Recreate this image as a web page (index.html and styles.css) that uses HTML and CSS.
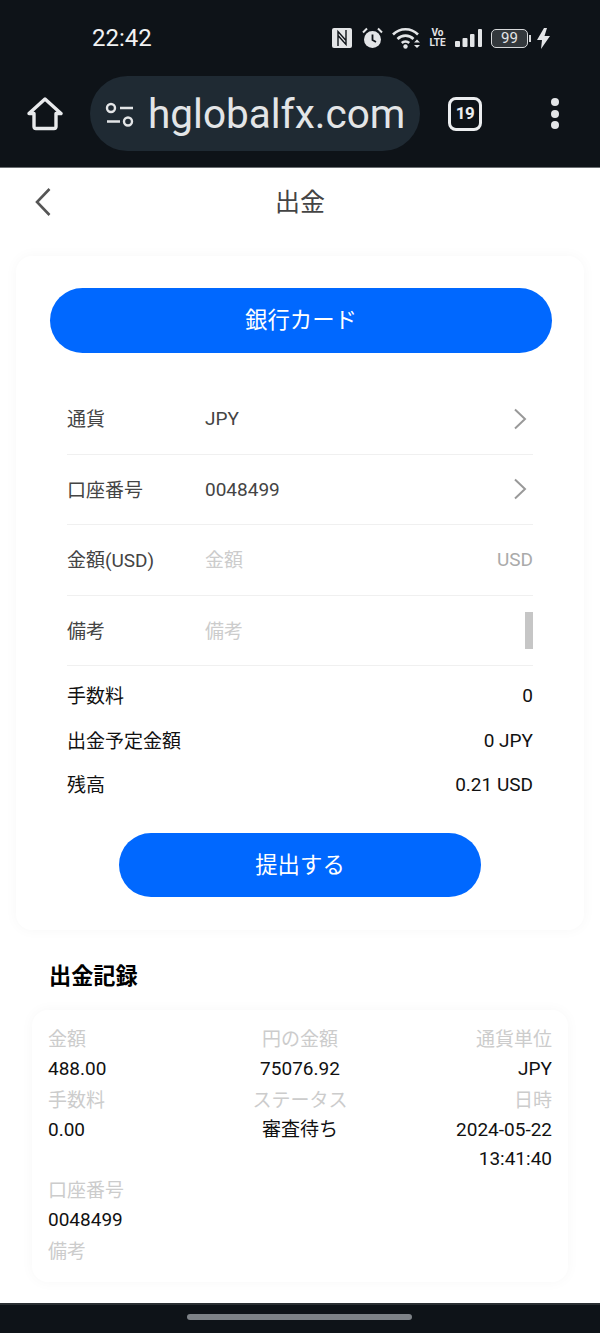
FILE: index.html
```html
<!DOCTYPE html>
<html lang="ja">
<head>
    <meta charset="UTF-8">
    <meta name="viewport" content="width=device-width, initial-scale=1.0">
    <title>出金</title>
    <link rel="stylesheet" href="styles.css">
</head>
<body>
    <header class="chrome">
        <div class="status-bar">
            <span class="clock">22:42</span>
            <div class="status-icons">
                <svg class="ic-nfc" width="20" height="20" viewBox="0 0 20 20"><rect width="20" height="20" rx="2" fill="#e3e5e7"/><path d="M6 18V3.500l8 9M14 2v14.500l-8-9" fill="none" stroke="#0e1318" stroke-width="1.400"/></svg>
                <svg class="ic-alarm" width="21" height="22" viewBox="0 0 21 22"><circle cx="10.500" cy="12.500" r="8.500" fill="#e3e5e7"/><path d="M10.500 7.500v5.500l3.500 2" fill="none" stroke="#0e1318" stroke-width="1.800"/><path d="M1 5.500 5 1.500M20 5.500l-4-4" stroke="#e3e5e7" stroke-width="2" fill="none"/></svg>
                <svg class="ic-wifi" width="29" height="22" viewBox="0 0 29 22"><g fill="none" stroke="#e3e5e7" stroke-width="2.600"><path d="M1 7.500c7-7 18-7 25 0"/><path d="M5.500 12c4.500-4.500 11.500-4.500 16 0"/><path d="M9.800 16c2-2 5.400-2 7.400 0"/></g><circle cx="13.500" cy="19.500" r="2.200" fill="#e3e5e7"/><path fill="#e3e5e7" d="M22 15.500h6l-3-3zM22 18h6l-3 3z"/></svg>
                <div class="volte"><span>Vo</span><span>LTE</span></div>
                <svg class="ic-signal" width="27" height="20" viewBox="0 0 27 20"><g fill="#e3e5e7"><rect x="0" y="13" width="5" height="6" rx="1"/><rect x="7.500" y="10" width="5" height="9" rx="1"/><rect x="15" y="6" width="4.500" height="13" rx="1"/><rect x="23" y="1" width="4" height="18" rx="1"/></g></svg>
                <div class="battery"><div class="battery-body">99</div><div class="battery-nub"></div></div>
                <svg class="ic-bolt" width="13" height="21" viewBox="0 0 13 21"><path fill="#e3e5e7" d="M7 0 0 12h5l-1 9 9-13H7.500L10 0z"/></svg>
            </div>
        </div>
        <div class="toolbar">
            <svg class="ic-home" width="36" height="36" viewBox="0 0 36 36"><path d="M2 17.500 18 3l16 14.500h-5v13a2 2 0 0 1-2 2H9a2 2 0 0 1-2-2v-13z" fill="none" stroke="#e8eaec" stroke-width="3.400" stroke-linejoin="round"/></svg>
            <div class="url-pill">
                <svg class="ic-tune" width="30" height="26" viewBox="0 0 30 26"><g fill="none" stroke="#e3e5e7" stroke-width="2.400"><circle cx="6" cy="6" r="4"/><path d="M15 6h13M2 19.500h13"/><circle cx="23" cy="19.500" r="4"/></g></svg>
                <span class="url-text">hglobalfx.com</span>
            </div>
            <div class="tab-count">19</div>
            <div class="menu-dots"><i></i><i></i><i></i></div>
        </div>
    </header>

    <main class="page">
        <div class="nav-bar">
            <svg class="ic-back" width="18" height="30" viewBox="0 0 18 30"><path d="M15.500 2 3 15l12.500 13" fill="none" stroke="#555" stroke-width="2.600"/></svg>
            <h1 class="nav-title">出金</h1>
        </div>

        <section class="card">
            <button type="button" class="btn btn-wide">銀行カード</button>
            <div class="form-rows">
                <div class="form-row">
                    <span class="form-label">通貨</span>
                    <span class="form-value">JPY</span>
                    <svg class="ic-chevron" width="14" height="22" viewBox="0 0 14 22"><path d="M2 1.500 12 11 2 20.500" fill="none" stroke="#999" stroke-width="2"/></svg>
                </div>
                <div class="form-row">
                    <span class="form-label">口座番号</span>
                    <span class="form-value">0048499</span>
                    <svg class="ic-chevron" width="14" height="22" viewBox="0 0 14 22"><path d="M2 1.500 12 11 2 20.500" fill="none" stroke="#999" stroke-width="2"/></svg>
                </div>
                <div class="form-row">
                    <span class="form-label">金額(USD)</span>
                    <span class="form-value placeholder">金額</span>
                    <span class="form-unit">USD</span>
                </div>
                <div class="form-row">
                    <span class="form-label">備考</span>
                    <span class="form-value placeholder">備考</span>
                    <div class="resize-bar"></div>
                </div>
            </div>
            <div class="summary">
                <div class="summary-row"><span class="summary-label">手数料</span><span>0</span></div>
                <div class="summary-row"><span class="summary-label">出金予定金額</span><span>0 JPY</span></div>
                <div class="summary-row"><span class="summary-label">残高</span><span>0.21 USD</span></div>
            </div>
            <button type="button" class="btn btn-submit">提出する</button>
        </section>

        <h2 class="records-title">出金記録</h2>
        <section class="record">
            <div class="cell"><span class="cell-label">金額</span><span>488.00</span></div>
            <div class="cell center"><span class="cell-label">円の金額</span><span>75076.92</span></div>
            <div class="cell right"><span class="cell-label">通貨単位</span><span>JPY</span></div>
            <div class="cell"><span class="cell-label">手数料</span><span>0.00</span></div>
            <div class="cell center"><span class="cell-label">ステータス</span><span>審査待ち</span></div>
            <div class="cell right"><span class="cell-label">日時</span><span>2024-05-22<br>13:41:40</span></div>
            <div class="cell"><span class="cell-label">口座番号</span><span>0048499</span></div>
            <div class="cell center"></div>
            <div class="cell right"></div>
            <div class="cell"><span class="cell-label">備考</span></div>
        </section>
    </main>

    <footer class="gesture-bar"><div class="home-handle"></div></footer>
</body>
</html>
```

FILE: styles.css
```css
* {
    box-sizing: border-box;
}
body {
    margin: 0;
    height: 1333px;
    display: flex;
    flex-direction: column;
    overflow: hidden;
    background-color: #fff;
    font-family: Roboto, "Noto Sans CJK JP", sans-serif;
    font-size: 19px;
    color: #111;
}
.chrome {
    height: 168px;
    flex: none;
    background-color: #0e1318;
    border-bottom: 1px solid #6b6f72;
}
.status-bar {
    height: 76px;
    display: flex;
    align-items: center;
    padding-left: 92px;
    padding-right: 50px;
}
.clock {
    font-size: 24px;
    color: #f1f2f3;
}
.status-icons {
    margin-left: auto;
    display: flex;
    align-items: center;
}
.ic-alarm {
    margin-left: 10px;
}
.ic-wifi {
    margin-left: 9px;
}
.volte {
    margin-left: 9px;
    width: 15px;
    display: flex;
    flex-direction: column;
    align-items: center;
    font-size: 10px;
    line-height: 10px;
    font-weight: 700;
    color: #e3e5e7;
}
.ic-signal {
    margin-left: 10px;
}
.battery {
    margin-left: 9px;
    display: flex;
    align-items: center;
    gap: 1px;
}
.battery-body {
    width: 37px;
    height: 19px;
    border: 1.5px solid #d5d7d9;
    border-radius: 5px;
    background-color: #33383c;
    color: #e3e5e7;
    font-size: 15px;
    line-height: 16px;
    text-align: center;
}
.battery-nub {
    width: 2px;
    height: 7px;
    background-color: #d5d7d9;
}
.ic-bolt {
    margin-left: 6px;
}
.toolbar {
    height: 75px;
    display: flex;
    align-items: center;
}
.ic-home {
    margin-left: 27px;
}
.url-pill {
    margin-left: 27px;
    width: 330px;
    height: 75px;
    border-radius: 38px;
    background-color: #1f2a33;
    display: flex;
    align-items: center;
    padding-left: 15px;
}
.ic-tune {
    margin-top: 2px;
}
.url-text {
    margin-left: 13px;
    font-size: 40.500px;
    color: #e3e5e7;
    white-space: nowrap;
}
.tab-count {
    margin-left: 28px;
    width: 34px;
    height: 34px;
    border: 3.500px solid #eceef0;
    border-radius: 8px;
    color: #eceef0;
    font-size: 17px;
    font-weight: 700;
    letter-spacing: -0.5px;
    line-height: 27px;
    text-align: center;
}
.menu-dots {
    margin-left: 69px;
    display: flex;
    flex-direction: column;
    gap: 3.500px;
}
.menu-dots i {
    width: 8px;
    height: 8px;
    border-radius: 50%;
    background-color: #e3e5e7;
}
.page {
    flex: 1;
    min-height: 0;
}
.nav-bar {
    height: 68px;
    position: relative;
    display: flex;
    align-items: center;
    justify-content: center;
    padding-bottom: 4px;
}
.ic-back {
    position: absolute;
    left: 34px;
    top: 19px;
}
.nav-title {
    margin: 0;
    font-size: 25px;
    font-weight: 400;
    color: #444;
}
.card {
    margin: 20px 16px 0;
    height: 674px;
    padding: 32px 34px 0;
    border-radius: 16px;
    background-color: #fff;
    box-shadow: 0 0 14px rgba(0, 0, 0, 0.035);
}
.btn {
    display: block;
    border: none;
    background-color: #0068ff;
    color: #fff;
    font-family: inherit;
    font-size: 22.400px;
}
.btn-wide {
    width: 502px;
    height: 65px;
    border-radius: 33px;
    padding-bottom: 7px;
}
.form-rows {
    margin-top: 31px;
    padding: 0 17px;
}
.form-row {
    height: 70.500px;
    display: flex;
    align-items: center;
    border-bottom: 1px solid #f0f0f0;
    color: #444;
}
.form-label {
    width: 138px;
    flex: none;
    padding-bottom: 2px;
}
.form-value {
    flex: 1;
}
.placeholder {
    color: #ccc;
    padding-bottom: 2px;
}
.form-unit {
    color: #aaa;
}
.ic-chevron {
    margin-right: 6px;
}
.resize-bar {
    width: 8px;
    height: 37px;
    background-color: #c6c6c6;
}
.summary {
    padding: 7px 17px 0;
}
.summary-row {
    height: 44.700px;
    display: flex;
    align-items: center;
    justify-content: space-between;
}
.summary-label {
    padding-bottom: 2px;
}
.btn-submit {
    margin: 26px auto 0;
    width: 362px;
    height: 64px;
    border-radius: 32px;
    padding-bottom: 6px;
}
.records-title {
    margin: 30px 0 0 49px;
    height: 32px;
    font-size: 22.200px;
    line-height: 32px;
    font-weight: 700;
    color: #000;
}
.record {
    margin: 18px 32px 0;
    height: 272px;
    padding: 15px 16px 0;
    border-radius: 16px;
    background-color: #fff;
    box-shadow: 0 0 14px rgba(0, 0, 0, 0.035);
    display: grid;
    grid-template-columns: 1fr 1fr 1fr;
    align-content: start;
    line-height: 29px;
}
.cell {
    display: flex;
    flex-direction: column;
    align-items: flex-start;
}
.cell span:last-child {
    margin-bottom: 3px;
}
.center {
    align-items: center;
    text-align: center;
}
.right {
    align-items: flex-end;
    text-align: right;
}
.cell-label {
    color: #ccc;
}
.gesture-bar {
    height: 30px;
    flex: none;
    background-color: #0e1318;
    border-top: 2px solid #2a2f33;
    display: flex;
    justify-content: center;
    padding-top: 9px;
}
.home-handle {
    width: 225px;
    height: 6px;
    margin-right: 1px;
    border-radius: 3px;
    background-color: #7d8287;
}
```
